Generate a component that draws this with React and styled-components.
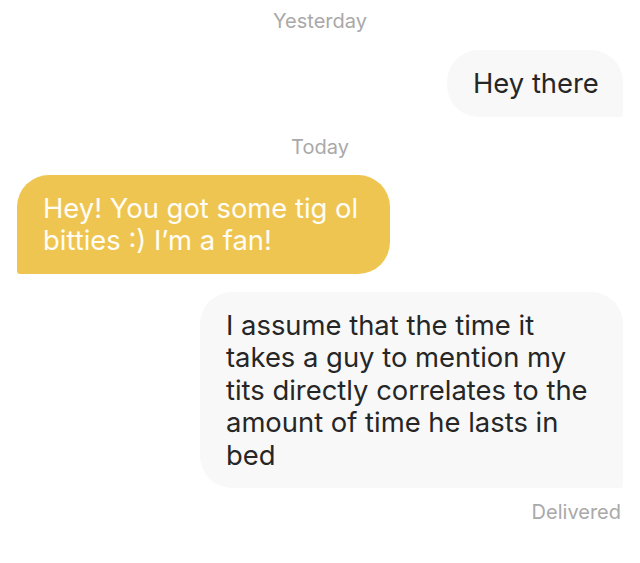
import styled, { createGlobalStyle } from "styled-components";

const GlobalStyle = createGlobalStyle`
  html, body {
    margin: 0;
    padding: 0;
    background: #ffffff;
  }
  body {
    font-family: "Inter", "Roboto", "Liberation Sans", sans-serif;
  }
`;

const Thread = styled.main`
  display: flex;
  flex-direction: column;
  width: 640px;
  height: 563px;
  box-sizing: border-box;
  padding: 9px 17px 0;
  overflow: hidden;
`;

const Stamp = styled.div`
  align-self: ${(p) => (p.$side === "right" ? "flex-end" : "center")};
  margin-top: ${(p) => p.$gap || 0}px;
  margin-right: ${(p) => (p.$side === "right" ? 2 : 0)}px;
  font-size: 20px;
  line-height: 24px;
  color: #a9a9a9;
`;

const Bubble = styled.div`
  align-self: ${(p) => (p.$mine ? "flex-end" : "flex-start")};
  margin-top: ${(p) => p.$gap || 0}px;
  width: ${(p) => p.$width}px;
  box-sizing: border-box;
  padding: 17px 26px;
  font-size: 27.4px;
  line-height: 32.5px;
  white-space: pre;
  color: ${(p) => (p.$mine ? "#262626" : "#fffdf5")};
  background: ${(p) => (p.$mine ? "#f8f8f8" : "#efc552")};
  border-radius: ${(p) => (p.$mine ? "32px 32px 3px 32px" : "32px 32px 32px 3px")};
`;

export default function App() {
  return (
    <>
      <GlobalStyle />
      <Thread>
        <Stamp>Yesterday</Stamp>
        <Bubble $mine $gap={17} $width={176}>Hey there</Bubble>

        <Stamp $gap={18}>Today</Stamp>
        <Bubble $gap={16} $width={373}>
          {"Hey! You got some tig ol\nbitties :) I’m a fan!"}
        </Bubble>

        <Bubble $mine $gap={18} $width={423}>
          {"I assume that the time it\ntakes a guy to mention my\ntits directly correlates to the\namount of time he lasts in\nbed"}
        </Bubble>
        <Stamp $side="right" $gap={12}>Delivered</Stamp>
      </Thread>
    </>
  );
}
